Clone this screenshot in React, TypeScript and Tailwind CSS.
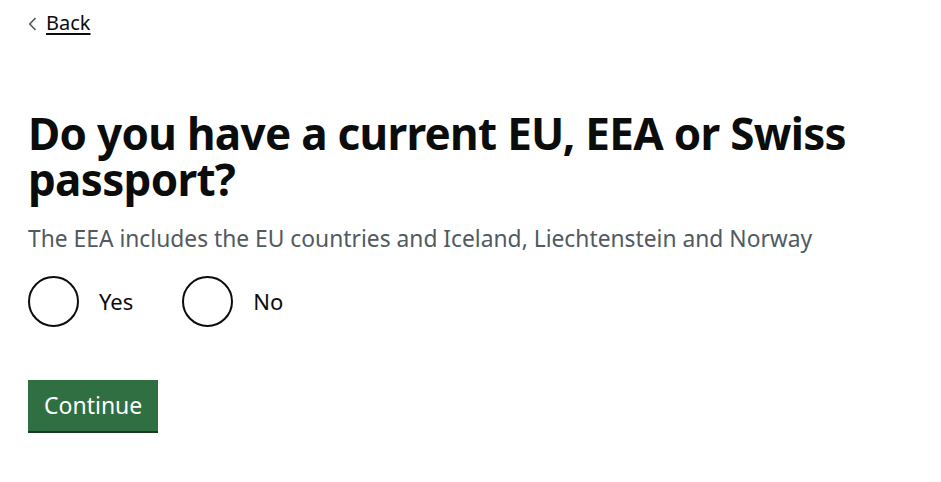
export default function App() {
  return (
    <div className="min-h-[482px] bg-white pl-[28px] pr-6 pt-[11px] text-[#0b0c0c]">
      <a href="#" className="inline-flex items-center gap-[9px] text-[20px] leading-[24px] text-[#0b0c0c] font-['Noto_Sans',sans-serif]">
        <svg width="9" height="14" viewBox="0 0 9 14" className="mt-[1px]">
          <path d="M7.5 1 L1.8 7 L7.5 13" fill="none" stroke="#505a5f" strokeWidth="1.6" />
        </svg>
        <span className="underline underline-offset-[3px] decoration-[1.5px]">Back</span>
      </a>

      <h1 className="mt-[73px] text-[44px] leading-[46px] font-bold tracking-[-0.7px] font-['Noto_Sans',sans-serif] max-w-[860px]">
        Do you have a current EU, EEA or Swiss passport?
      </h1>

      <p className="mt-[23px] text-[22.8px] leading-[28px] text-[#505a5f] font-['Noto_Sans',sans-serif]">
        The EEA includes the EU countries and Iceland, Liechtenstein and Norway
      </p>

      <div className="mt-[23px] flex items-center gap-[49px] font-['Noto_Sans',sans-serif]">
        {["Yes", "No"].map((label) => (
          <label key={label} className="flex items-center gap-[20px] cursor-pointer">
            <span className="w-[51px] h-[51px] rounded-full border-2 border-[#0b0c0c] bg-white" />
            <span className="text-[22px] leading-[28px]">{label}</span>
          </label>
        ))}
      </div>

      <button className="mt-[53px] h-[51px] px-[16px] bg-[#2f6f41] text-white text-[23px] leading-[28px] font-['Noto_Sans',sans-serif] shadow-[0_2px_0_#1a3a24]">
        Continue
      </button>
    </div>
  )
}
